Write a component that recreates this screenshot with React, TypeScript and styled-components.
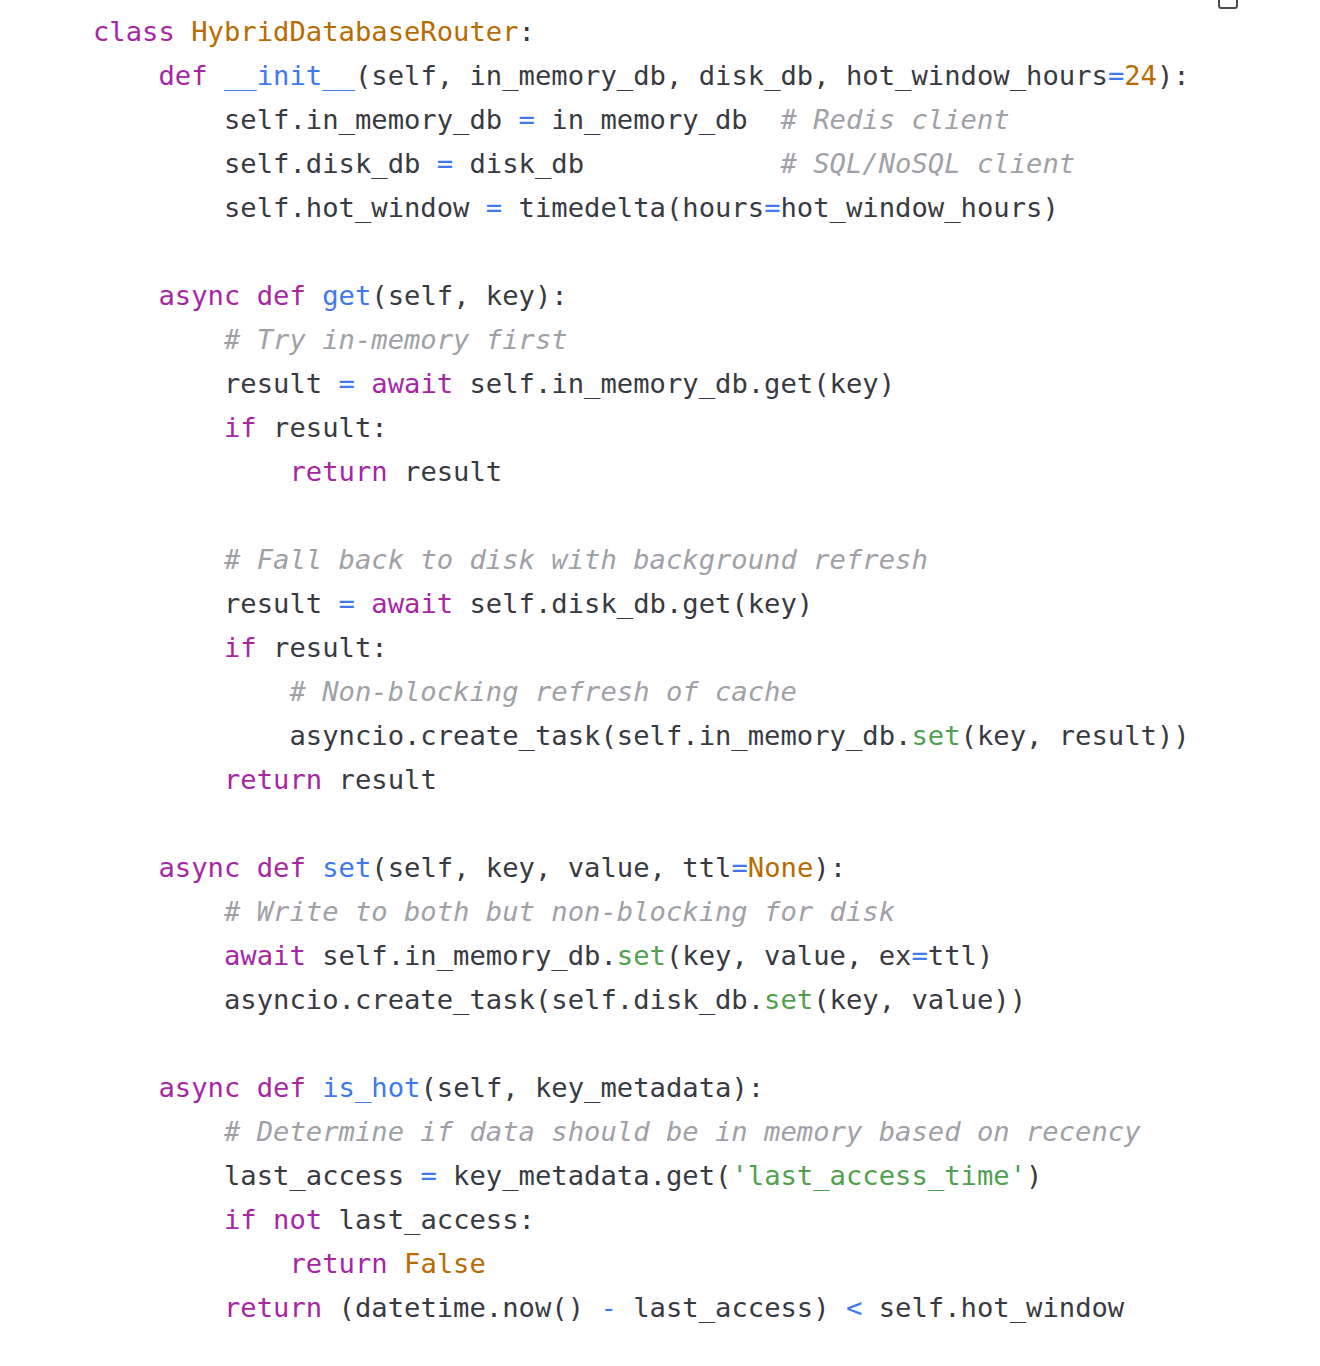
import React from "react";
import styled, { createGlobalStyle } from "styled-components";

const Global = createGlobalStyle`
  html, body { margin: 0; padding: 0; background: #ffffff; }
  #root { background: #ffffff; }
`;

type Kind = "t" | "kw" | "cls" | "fn" | "num" | "op" | "cm" | "str" | "bi";

const colors: Record<Kind, string> = {
  t: "#383a42",
  kw: "#a626a4",
  cls: "#b76b01",
  fn: "#4078f2",
  num: "#b76b01",
  op: "#4078f2",
  cm: "#a0a1a7",
  str: "#50a14f",
  bi: "#50a14f",
};

const Block = styled.div`
  position: relative;
  width: 1320px;
  min-height: 1366px;
  background: #ffffff;
`;

const Code = styled.pre`
  margin: 0;
  padding: 10px 0 0 93px;
  font-family: "DejaVu Sans Mono", "Liberation Mono", monospace;
  font-size: 27.2px;
  line-height: 44px;
  color: #383a42;
  white-space: pre;
`;

const Line = styled.div`
  height: 44px;
`;

const Tok = styled.span<{ $k: Kind }>`
  color: ${(p) => colors[p.$k]};
  font-style: ${(p) => (p.$k === "cm" ? "italic" : "normal")};
`;

const CopyButton = styled.button`
  position: absolute;
  top: -14px;
  left: 1217px;
  width: 22px;
  height: 24px;
  padding: 0;
  border: none;
  background: transparent;
  display: flex;
  align-items: flex-end;
  justify-content: center;
`;

type T = [Kind, string];
const L = (...toks: T[]) => toks;

const lines: T[][] = [
  L(["kw", "class"], ["t", " "], ["cls", "HybridDatabaseRouter"], ["t", ":"]),
  L(["t", "    "], ["kw", "def"], ["t", " "], ["fn", "__init__"], ["t", "(self, in_memory_db, disk_db, hot_window_hours"], ["op", "="], ["num", "24"], ["t", "):"]),
  L(["t", "        self.in_memory_db "], ["op", "="], ["t", " in_memory_db  "], ["cm", "# Redis client"]),
  L(["t", "        self.disk_db "], ["op", "="], ["t", " disk_db            "], ["cm", "# SQL/NoSQL client"]),
  L(["t", "        self.hot_window "], ["op", "="], ["t", " timedelta(hours"], ["op", "="], ["t", "hot_window_hours)"]),
  L(),
  L(["t", "    "], ["kw", "async"], ["t", " "], ["kw", "def"], ["t", " "], ["fn", "get"], ["t", "(self, key):"]),
  L(["t", "        "], ["cm", "# Try in-memory first"]),
  L(["t", "        result "], ["op", "="], ["t", " "], ["kw", "await"], ["t", " self.in_memory_db.get(key)"]),
  L(["t", "        "], ["kw", "if"], ["t", " result:"]),
  L(["t", "            "], ["kw", "return"], ["t", " result"]),
  L(),
  L(["t", "        "], ["cm", "# Fall back to disk with background refresh"]),
  L(["t", "        result "], ["op", "="], ["t", " "], ["kw", "await"], ["t", " self.disk_db.get(key)"]),
  L(["t", "        "], ["kw", "if"], ["t", " result:"]),
  L(["t", "            "], ["cm", "# Non-blocking refresh of cache"]),
  L(["t", "            asyncio.create_task(self.in_memory_db."], ["bi", "set"], ["t", "(key, result))"]),
  L(["t", "        "], ["kw", "return"], ["t", " result"]),
  L(),
  L(["t", "    "], ["kw", "async"], ["t", " "], ["kw", "def"], ["t", " "], ["fn", "set"], ["t", "(self, key, value, ttl"], ["op", "="], ["num", "None"], ["t", "):"]),
  L(["t", "        "], ["cm", "# Write to both but non-blocking for disk"]),
  L(["t", "        "], ["kw", "await"], ["t", " self.in_memory_db."], ["bi", "set"], ["t", "(key, value, ex"], ["op", "="], ["t", "ttl)"]),
  L(["t", "        asyncio.create_task(self.disk_db."], ["bi", "set"], ["t", "(key, value))"]),
  L(),
  L(["t", "    "], ["kw", "async"], ["t", " "], ["kw", "def"], ["t", " "], ["fn", "is_hot"], ["t", "(self, key_metadata):"]),
  L(["t", "        "], ["cm", "# Determine if data should be in memory based on recency"]),
  L(["t", "        last_access "], ["op", "="], ["t", " key_metadata.get("], ["str", "'last_access_time'"], ["t", ")"]),
  L(["t", "        "], ["kw", "if"], ["t", " "], ["kw", "not"], ["t", " last_access:"]),
  L(["t", "            "], ["kw", "return"], ["t", " "], ["num", "False"]),
  L(["t", "        "], ["kw", "return"], ["t", " (datetime.now() "], ["op", "-"], ["t", " last_access) "], ["op", "<"], ["t", " self.hot_window"]),
];

export default function App() {
  return (
    <Block>
      <Global />
      <CopyButton aria-label="Copy code">
        <svg width="22" height="24" viewBox="0 0 22 24" fill="none">
          <rect x="2" y="-6" width="18" height="28" rx="2.5" stroke="#4a4a4a" strokeWidth="2" />
        </svg>
      </CopyButton>
      <Code>
        {lines.map((toks, i) => (
          <Line key={i}>
            {toks.map(([k, s], j) => (
              <Tok key={j} $k={k}>
                {s}
              </Tok>
            ))}
          </Line>
        ))}
      </Code>
    </Block>
  );
}
